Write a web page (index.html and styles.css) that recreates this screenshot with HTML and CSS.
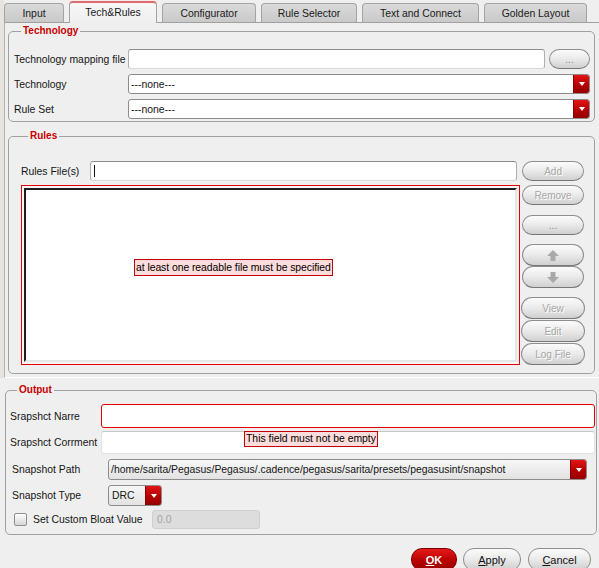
FILE: index.html
```html
<!DOCTYPE html>
<html>
<head>
<meta charset="utf-8">
<link rel="stylesheet" href="styles.css">
</head>
<body>
<div class="upper">
  <div class="tabs">
    <div class="tab w-input">Input</div>
    <div class="tab active w-tech">Tech&amp;Rules</div>
    <div class="tab w-conf">Configurator</div>
    <div class="tab w-rule">Rule Selector</div>
    <div class="tab w-text">Text and Connect</div>
    <div class="tab w-gold">Golden Layout</div>
  </div>
  <div class="panel">
    <fieldset class="group tech">
      <legend>Technology</legend>
      <div class="tgrid">
        <div class="lbl">Technology mapping file</div>
        <div class="rowflex">
          <div class="field grow"></div>
          <div class="btn dots">...</div>
        </div>
        <div class="lbl">Technology</div>
        <div class="select"><span class="stext">---none---</span><span class="arrow"></span></div>
        <div class="lbl">Rule Set</div>
        <div class="select"><span class="stext">---none---</span><span class="arrow"></span></div>
      </div>
    </fieldset>
    <fieldset class="group rules">
      <legend>Rules</legend>
      <div class="rules-top">
        <div class="lbl rl">Rules File(s)</div>
        <div class="field rulesfile"><span class="caret"></span></div>
        <div class="btn side disabled">Add</div>
      </div>
      <div class="rules-main">
        <div class="listbox">
          <div class="listinner"></div>
          <div class="tip tip-list">at least one readable file must be specified</div>
        </div>
        <div class="sidebtns">
          <div class="btn side disabled">Remove</div>
          <div class="btn side dots sp10">...</div>
          <div class="btn side tall sp9"><svg width="12" height="11" viewBox="0 0 12 11"><path d="M6 0 L12 6 L8.5 6 L8.5 11 L3.5 11 L3.5 6 L0 6 Z" fill="#a9a9a9"/></svg></div>
          <div class="btn side tall"><svg width="12" height="11" viewBox="0 0 12 11"><path d="M6 11 L12 5 L8.5 5 L8.5 0 L3.5 0 L3.5 5 L0 5 Z" fill="#a9a9a9"/></svg></div>
          <div class="btn wide tall disabled sp9">View</div>
          <div class="btn wide tall disabled sp1">Edit</div>
          <div class="btn wide tall disabled sp1">Log File</div>
        </div>
      </div>
    </fieldset>
  </div>
</div>
<div class="lower">
  <fieldset class="group output">
    <legend>Output</legend>
    <div class="orow r-name">
      <div class="lbl olbl">Srapshct Narre</div>
      <div class="field grow errfield"></div>
    </div>
    <div class="orow r-comment">
      <div class="lbl olbl">Srapshct Corrment</div>
      <div class="field grow cfield">
        <div class="tip tip-comment">This field must not be empty</div>
      </div>
    </div>
    <div class="orow r-path">
      <div class="lbl plbl">Snapshot Path</div>
      <div class="select gray pathsel"><span class="stext">/home/sarita/Pegasus/Pegasus/.cadence/pegasus/sarita/presets/pegasusint/snapshot</span><span class="arrow"></span></div>
    </div>
    <div class="orow r-type">
      <div class="lbl plbl">Snapshot Type</div>
      <div class="select gray typesel"><span class="stext">DRC</span><span class="arrow"></span></div>
    </div>
    <div class="orow r-check">
      <div class="checkbox"></div>
      <div class="lbl chklbl">Set Custom Bloat Value</div>
      <div class="field disabledfield">0.0</div>
    </div>
  </fieldset>
  <div class="actions">
    <div class="dlgbtn ok"><u>O</u>K</div>
    <div class="dlgbtn apply"><u>A</u>pply</div>
    <div class="dlgbtn cancel"><u>C</u>ancel</div>
  </div>
</div>
</body>
</html>
```
FILE: styles.css
```css
* { box-sizing: border-box; }
html, body { margin: 0; padding: 0; }
body {
  width: 599px;
  height: 568px;
  overflow: hidden;
  background: #efefef;
  font-family: "Liberation Sans", Arial, sans-serif;
  font-size: 10.4px;
  color: #151515;
}

/* ---------- upper (tabbed) area ---------- */
.upper { border-left: 4px solid #e7e4df; }
.tabs {
  display: flex;
  gap: 5px;
  align-items: flex-end;
  height: 22px;
}
.tab {
  height: 19px;
  display: flex;
  align-items: center;
  justify-content: center;
  border: 1px solid #a4a4a4;
  border-bottom: none;
  border-radius: 4px 4px 0 0;
  background: linear-gradient(#dadada, #c9c9c9);
  padding-top: 1px;
  color: #1a1a1a;
}
.tab.active {
  height: 22px;
  margin-bottom: -1px;
  position: relative;
  z-index: 1;
  background: linear-gradient(#f7f7f7, #efefef);
  border-top: 2px solid #e26a6a;
  padding-top: 0;
  padding-bottom: 1px;
}
.w-input { width: 60px; }
.w-tech { width: 88px; }
.w-conf { width: 94px; }
.w-rule { width: 96px; }
.w-text { width: 117px; }
.w-gold { width: 103px; }

.panel {
  border-top: 1px solid #a0a0a0;
  border-left: 1px solid #b2b2b2;
  border-bottom: 1px solid #ffffff;
  padding: 0 4px 3px 3px;
}

fieldset.group {
  margin: 0;
  border: 1px solid #a0a0a0;
  border-radius: 5px;
  min-width: 0;
}
fieldset.group legend {
  font-weight: bold;
  color: #c80000;
  font-size: 10px;
  line-height: 12px;
  padding: 0 2px;
  margin-left: 7px;
}
.tech { margin-top: 2px !important; padding: 12px 4px 2px 5px; }
.rules { margin-top: 8px !important; padding: 19px 9px 8px 12px; }

.tgrid {
  display: grid;
  grid-template-columns: 114px 1fr;
  grid-auto-rows: 20px;
  row-gap: 5px;
}
.lbl { display: flex; align-items: center; white-space: nowrap; }
.rowflex { display: flex; gap: 4px; }
.grow { flex: 1; }

.field {
  height: 20px;
  background: #ffffff;
  border: 1px solid #b0b0b0;
  border-top-color: #8c8c8c;
  border-bottom-color: #d8d8d8;
  border-radius: 3px;
  position: relative;
}

.btn {
  height: 20px;
  border: 1px solid #8e8e8e;
  border-bottom-color: #777;
  border-radius: 10px;
  background: linear-gradient(#fbfbfb, #ececec 45%, #d0d0d0);
  display: flex;
  align-items: center;
  justify-content: center;
  font-size: 10px;
  color: #333;
}
.btn.dots { width: 41px; color: #888; }
.btn.disabled { color: #a6a6a6; text-shadow: 1px 1px 0 #ffffff; }
.btn.side { width: 62px; margin: 0 1px; }
.btn.wide { width: 64px; }
.btn.tall { height: 22px; border-radius: 11px; }
.sp10 { margin-top: 10px !important; }
.sp9 { margin-top: 9px !important; }
.sp1 { margin-top: 1px !important; }

.select {
  height: 20px;
  display: flex;
  border: 1px solid #8c8c8c;
  border-radius: 3px;
  background: #ffffff;
  overflow: hidden;
}
.select.gray { background: linear-gradient(#f7f7f7, #e2e2e2); height: 21px; }
.stext {
  flex: 1;
  display: flex;
  align-items: center;
  padding-left: 2px;
  white-space: nowrap;
  overflow: hidden;
}
.arrow {
  width: 16px;
  background: linear-gradient(#e41414, #b00000 60%, #960000);
  display: flex;
  align-items: center;
  justify-content: center;
  border-left: 1px solid #8a0000;
}
.arrow::after {
  content: "";
  width: 0;
  height: 0;
  border-left: 3.5px solid transparent;
  border-right: 3.5px solid transparent;
  border-top: 4px solid #ffffff;
}

/* rules */
.rules-top { display: flex; align-items: center; height: 20px; }
.rl { width: 69px; }
.rulesfile { width: 428px; margin-right: 4px; }
.caret {
  display: block;
  width: 1px;
  height: 12px;
  background: #111;
  margin: 3px 0 0 3px;
}
.rules-main { display: flex; gap: 1px; margin-top: 4px; }
.listbox {
  width: 499px;
  height: 180px;
  border: 1px solid #e80000;
  padding: 2px;
  background: #f6f6f6;
  position: relative;
}
.listinner {
  height: 100%;
  background: #ffffff;
  border-top: 2px solid #1e1e1e;
  border-left: 2px solid #1e1e1e;
  border-right: 2px solid #e6e6e6;
  border-bottom: 2px solid #e6e6e6;
}
.sidebtns { width: 64px; display: flex; flex-direction: column; }

.tip {
  position: absolute;
  background: #fddcdc;
  border: 1px solid #c40000;
  padding: 0 1px 0 1px;
  line-height: 15px;
  white-space: nowrap;
  color: #000;
}
.tip-list { left: 112px; top: 73px; letter-spacing: -0.05px; }
.tip-comment { left: 142px; top: -1px; line-height: 14px; }

/* ---------- lower area ---------- */
.lower { padding-top: 6px; }
.output {
  margin: 0 0 0 5px !important;
  width: 592px;
  padding: 8px 1px 5px 4px;
}
.orow { display: flex; align-items: center; }
.olbl { width: 91px; }
.plbl { width: 98px; padding-left: 2px; }
.r-name { height: 24px; }
.r-name .field { height: 24px; }
.errfield { border: 1px solid #e80000; }
.r-comment { height: 23px; margin-top: 3px; }
.cfield { height: 23px; border-color: #e2e2e2; border-top-color: #c6c6c6; }
.r-path { height: 21px; margin-top: 5px; }
.pathsel { flex: 1; margin-right: 8px; }
.r-type { height: 21px; margin-top: 5px; }
.typesel { width: 54px; }
.typesel .stext { padding-left: 3px; }
.r-check { height: 19px; margin-top: 4px; }
.checkbox {
  width: 13px;
  height: 13px;
  margin-left: 4px;
  border: 1px solid #8e8e8e;
  border-radius: 2px;
  background: linear-gradient(#fdfdfd, #d6d6d6);
}
.chklbl { width: 119px; margin-left: 6px; }
.disabledfield {
  width: 108px;
  height: 19px;
  background: #dddddd;
  border: 1px solid #cfcfcf;
  color: #a4a4a4;
  display: flex;
  align-items: center;
  padding-left: 4px;
}

.actions {
  display: flex;
  justify-content: flex-end;
  margin-top: 13px;
  padding-right: 8px;
}
.dlgbtn {
  height: 23px;
  border: 1px solid #8e8e8e;
  border-radius: 11px;
  background: linear-gradient(#fbfbfb, #ececec 45%, #cfcfcf);
  display: flex;
  align-items: center;
  justify-content: center;
  font-size: 11px;
  color: #111;
}
.dlgbtn u { text-decoration: underline; }
.ok {
  width: 46px;
  margin-right: 6px;
  background: linear-gradient(#e61a1a, #b80000 55%, #9a0000);
  border-color: #7c0000;
  color: #ffffff;
  font-weight: bold;
}
.apply { width: 58px; margin-right: 7px; }
.cancel { width: 63px; }
```
